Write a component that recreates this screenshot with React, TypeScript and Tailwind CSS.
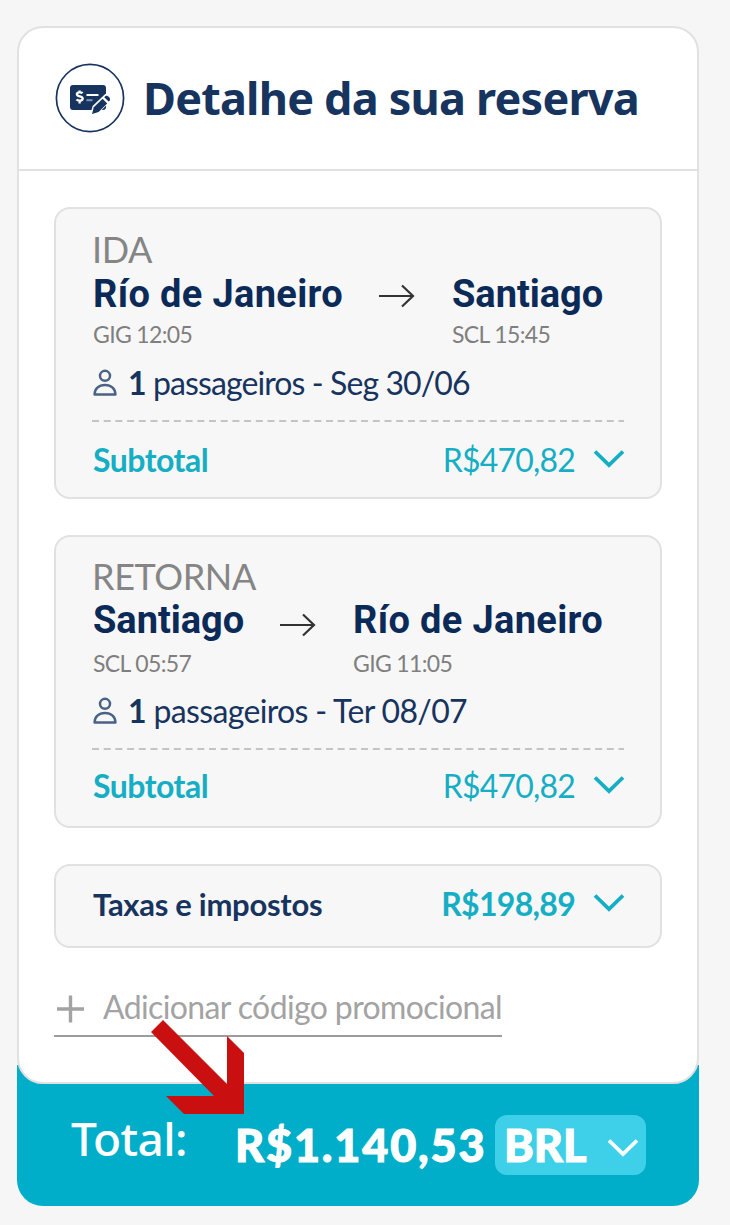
type Stop = {
    city: string;
    info: string;
};

type Leg = {
    label: string;
    from: Stop;
    to: Stop;
    date: string;
    subtotal: string;
};

const LEGS: Leg[] = [
    {
        label: 'IDA',
        from: { city: 'Río de Janeiro', info: 'GIG 12:05' },
        to: { city: 'Santiago', info: 'SCL 15:45' },
        date: 'Seg 30/06',
        subtotal: 'R$470,82',
    },
    {
        label: 'RETORNA',
        from: { city: 'Santiago', info: 'SCL 05:57' },
        to: { city: 'Río de Janeiro', info: 'GIG 11:05' },
        date: 'Ter 08/07',
        subtotal: 'R$470,82',
    },
];

const OUTBOUND = {
    card: 'h-[292px] pt-[20px]',
    city: 'pt-px',
    arrow: 'mt-[15px]',
    info: 'leading-[34px] -mt-px',
    passengers: 'pt-px tracking-[-0.9px]',
    subtotal: 'h-[76px]',
};

const RETURN = {
    card: 'h-[293px] pt-[19px]',
    city: '',
    arrow: 'mt-[17px]',
    info: 'leading-[38px] -mb-[3px] -mt-px pt-px',
    passengers: 'pt-px tracking-[-0.65px]',
    subtotal: 'h-[72px]',
};

function Chevron({ className = '' }: { className?: string }) {
    return (
        <svg className={className} width="32" height="20" viewBox="0 0 32 20" fill="none" stroke="currentColor" strokeWidth="3.8">
            <path d="M2 2.5 16 16 30 2.5" />
        </svg>
    );
}

function ReservationIcon() {
    return (
        <svg width="70" height="70" viewBox="0 0 70 70" className="-mt-[2px] text-[#17345f]">
            <circle cx="35" cy="35" r="33.6" fill="none" stroke="currentColor" strokeWidth="1.7" />
            <rect x="15" y="22" width="36" height="25" rx="3" fill="currentColor" />
            <path d="M27.500 30.200c-1-1.200-5.600-1.500-5.600 1 0 2.800 5.800 1.400 5.800 4.400 0 2.800-5 2.400-6.200 1M24.600 27.400v2.400M24.600 38v2.400" fill="none" stroke="#fff" strokeWidth="2.3" />
            <path d="M31.500 32h12" stroke="#fff" strokeWidth="2" />
            <path d="M31.500 37.200h6" stroke="#8296b3" strokeWidth="2" />
            <path d="m36.500 51 2-7.500L50.500 32l5 4.500-11.500 12Z" fill="#fff" stroke="#fff" strokeWidth="2" />
            <path d="m37 51 1.800-6.800 8.800-8.400 4.600 4.600-8.600 8.600Z" fill="currentColor" />
            <path d="m49.200 34.200 1.400-1.200c1.800-1.200 5.400 2 4.200 4.200l-1.200 1.400Z" fill="currentColor" />
        </svg>
    );
}

function UserIcon() {
    return (
        <svg width="24" height="28" viewBox="0 0 24 28" fill="none" stroke="#4b6285" strokeWidth="2.5">
            <circle cx="12" cy="6.8" r="5" />
            <path d="M1.600 25.400c0-5.400 4-9.400 10.400-9.400s10.400 4 10.400 9.400Z" strokeLinejoin="round" />
        </svg>
    );
}

function City({ stop, layout }: { stop: Stop; layout: typeof OUTBOUND }) {
    const size = stop.city === 'Santiago' ? 'w-[150px] tracking-[-0.05px]' : 'w-[249px] tracking-[0.35px]';

    return (
        <div className={size}>
            <div className={`font-['Roboto',sans-serif] text-[38px] leading-[48px] font-bold text-[#0b2a58] ${layout.city}`}>{stop.city}</div>
            <div className={`text-[23px] tracking-[-0.65px] text-[#7f7f7f] ${layout.info}`}>{stop.info}</div>
        </div>
    );
}

function LegCard({ leg, layout }: { leg: Leg; layout: typeof OUTBOUND }) {
    return (
        <section className={`rounded-[16px] border-2 border-[#e1e1e1] bg-[#f7f7f7] px-[36px] whitespace-nowrap ${layout.card}`}>
            <div className="text-[36px] leading-[40px] tracking-[-0.4px] text-[#858585]">{leg.label}</div>
            <div className="flex justify-between pr-[22px] pl-px">
                <City stop={leg.from} layout={layout} />
                <svg className={layout.arrow} width="36" height="24" viewBox="0 0 36 24" fill="none" stroke="#333" strokeWidth="2.2">
                    <path d="M0 12h34M23 1.500 34 12 23 22.500" />
                </svg>
                <City stop={leg.to} layout={layout} />
            </div>
            <div className={`flex h-[62px] items-center pl-px text-[32px] text-[#17345f] ${layout.passengers}`}>
                <UserIcon />
                <span className="ml-[11px]">
                    <b>1</b> passageiros - {leg.date}
                </span>
            </div>
            <svg className="mt-[7px] block" width="532" height="2" stroke="#c4c4c4" strokeWidth="2">
                <path d="M0 1h532" strokeDasharray="7 4.700" />
            </svg>
            <div className={`flex items-center pl-px text-[#16aec4] ${layout.subtotal}`}>
                <span className="text-[32px] font-bold tracking-[-0.5px]">Subtotal</span>
                <span className="ml-auto text-[32px] tracking-[-0.8px]">{leg.subtotal}</span>
                <Chevron className="-mt-[3px] -mr-px ml-[18px]" />
            </div>
        </section>
    );
}

export default function App() {
    return (
        <main className="relative h-[1225px] w-[730px] bg-[#f6f6f6] pt-[26px] pl-[17px] font-['Lato',sans-serif]">
            <div className="relative z-10 h-[1058px] w-[682px] rounded-[26px] border-2 border-[#e1e1e1] bg-white">
                <header className="flex h-[143px] items-center border-b-2 border-[#e1e1e1] pl-[36px]">
                    <ReservationIcon />
                    <h1 className="-mt-[2px] ml-[18px] font-['Noto_Sans',sans-serif] text-[45px] leading-none font-bold tracking-[-0.8px] whitespace-nowrap text-[#17345f]">
                        Detalhe da sua reserva
                    </h1>
                </header>

                <div className="flex flex-col gap-[36px] px-[35px] pt-[36px]">
                    <LegCard leg={LEGS[0]} layout={OUTBOUND} />
                    <LegCard leg={LEGS[1]} layout={RETURN} />

                    <section className="flex h-[84px] items-center rounded-[16px] border-2 border-[#e1e1e1] bg-[#f7f7f7] pr-[35px] pb-[4px] pl-[37px]">
                        <span className="text-[31px] font-bold tracking-[-0.28px] text-[#17345f]">Taxas e impostos</span>
                        <span className="ml-auto text-[32px] font-bold tracking-[-0.7px] text-[#16aec4]">R$198,89</span>
                        <Chevron className="-mt-[2px] ml-[18px] text-[#16aec4]" />
                    </section>
                </div>

                {/* Código promocional */}
                <button className="mt-[32px] ml-[35px] flex h-[57px] w-[448px] items-center border-b-2 border-[#9c9c9c] pb-px text-[32px] tracking-[-0.62px] whitespace-nowrap text-[#a3a3a3]">
                    <svg className="mt-[4px]" width="32" height="30" viewBox="0 0 32 30" stroke="currentColor" strokeWidth="3.4">
                        <path d="M3 15h27M16.500 1.500v27" />
                    </svg>
                    <span className="ml-[17px]">Adicionar código promocional</span>
                </button>
            </div>

            {/* Total */}
            <footer className="-mt-[19px] flex h-[141px] w-[682px] rounded-b-[26px] bg-[#00aec9] pt-[25px] pl-[54px] whitespace-nowrap text-white">
                <span className="w-[164px] pt-[25px] font-['Noto_Sans',sans-serif] text-[46px] leading-[46px] font-medium tracking-[-0.6px]">Total:</span>
                <span className="w-[260px] pt-[32px] text-[45px] leading-[46px] font-black tracking-[1.8px] [-webkit-text-stroke:1px_white]">
                    R$1.140,53
                </span>
                <button className="mt-[25px] flex h-[60px] w-[151px] items-center rounded-[12px] bg-[#3dd0e8] pl-[9px] text-[45px] leading-none font-black [-webkit-text-stroke:1px_white]">
                    BRL
                    <Chevron className="mt-[6px] mr-[7px] ml-auto" />
                </button>
            </footer>

            <svg className="absolute top-[1020px] left-[151px] z-20" width="94" height="95" viewBox="0 0 94 95" fill="#c90f10">
                <path d="M12 0 76 64V16l17 17v61H33L15 76h48L0 12Z" />
            </svg>
        </main>
    );
}
